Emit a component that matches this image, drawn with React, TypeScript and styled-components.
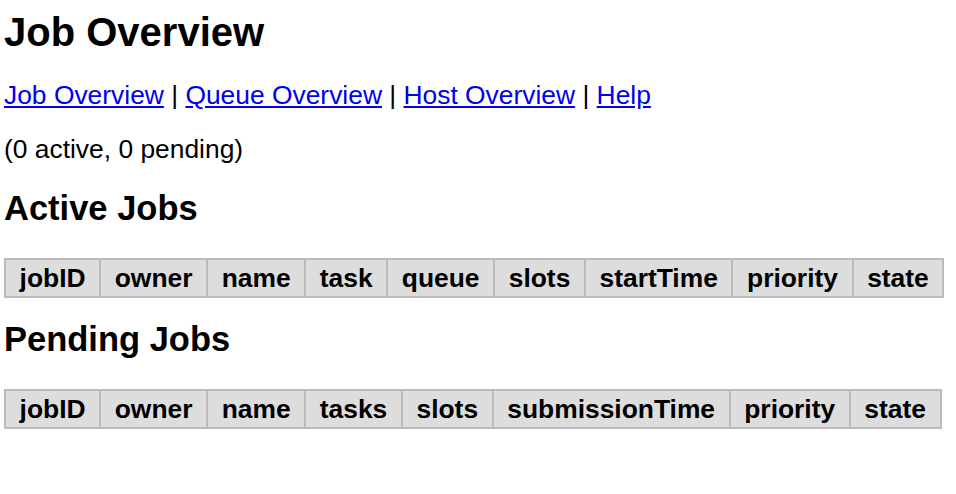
import React from "react";
import styled, { createGlobalStyle } from "styled-components";

const Global = createGlobalStyle`
  html, body { margin: 0; padding: 0; background: #fff; }
  body {
    font-family: "Liberation Sans", Arial, Helvetica, sans-serif;
    font-size: 26.4px;
    color: #000;
  }
`;

const Page = styled.div`
  display: flex;
  flex-direction: column;
  align-items: flex-start;
  padding: 9px 4px 0 4px;
`;

const Title = styled.h1`
  margin: 0 0 25px 0;
  font-size: 40px;
  font-weight: bold;
  line-height: 46px;
`;

const Nav = styled.div`
  margin: 0 0 24px 0;
  line-height: 30px;
  white-space: nowrap;
`;

const NavLink = styled.a`
  color: #0000ee;
  text-decoration: underline;
  text-underline-offset: 2px;
`;

const Summary = styled.p`
  margin: 0 0 24px 0;
  line-height: 30px;
`;

const Section = styled.h2`
  margin: 0 0 30px 0;
  font-size: 34.5px;
  font-weight: bold;
  line-height: 40px;
`;

const Table = styled.table`
  border-collapse: collapse;
  margin: 0 0 21px 0;
`;

const HeadCell = styled.th`
  background: #dddddd;
  border: 2px solid #bbbbbb;
  padding: 3px 13.6px;
  font-weight: bold;
  font-size: 26.4px;
  line-height: 30px;
  white-space: nowrap;
`;

const activeCols = ["jobID", "owner", "name", "task", "queue", "slots", "startTime", "priority", "state"];
const pendingCols = ["jobID", "owner", "name", "tasks", "slots", "submissionTime", "priority", "state"];

const links = ["Job Overview", "Queue Overview", "Host Overview", "Help"];

function JobTable({ cols }: { cols: string[] }) {
  return (
    <Table>
      <thead>
        <tr>
          {cols.map((c) => (
            <HeadCell key={c}>{c}</HeadCell>
          ))}
        </tr>
      </thead>
    </Table>
  );
}

export default function App() {
  return (
    <>
      <Global />
      <Page>
        <Title>Job Overview</Title>
        <Nav>
          {links.map((l, i) => (
            <React.Fragment key={l}>
              {i > 0 && " | "}
              <NavLink href="#">{l}</NavLink>
            </React.Fragment>
          ))}
        </Nav>
        <Summary>(0 active, 0 pending)</Summary>
        <Section>Active Jobs</Section>
        <JobTable cols={activeCols} />
        <Section>Pending Jobs</Section>
        <JobTable cols={pendingCols} />
      </Page>
    </>
  );
}
